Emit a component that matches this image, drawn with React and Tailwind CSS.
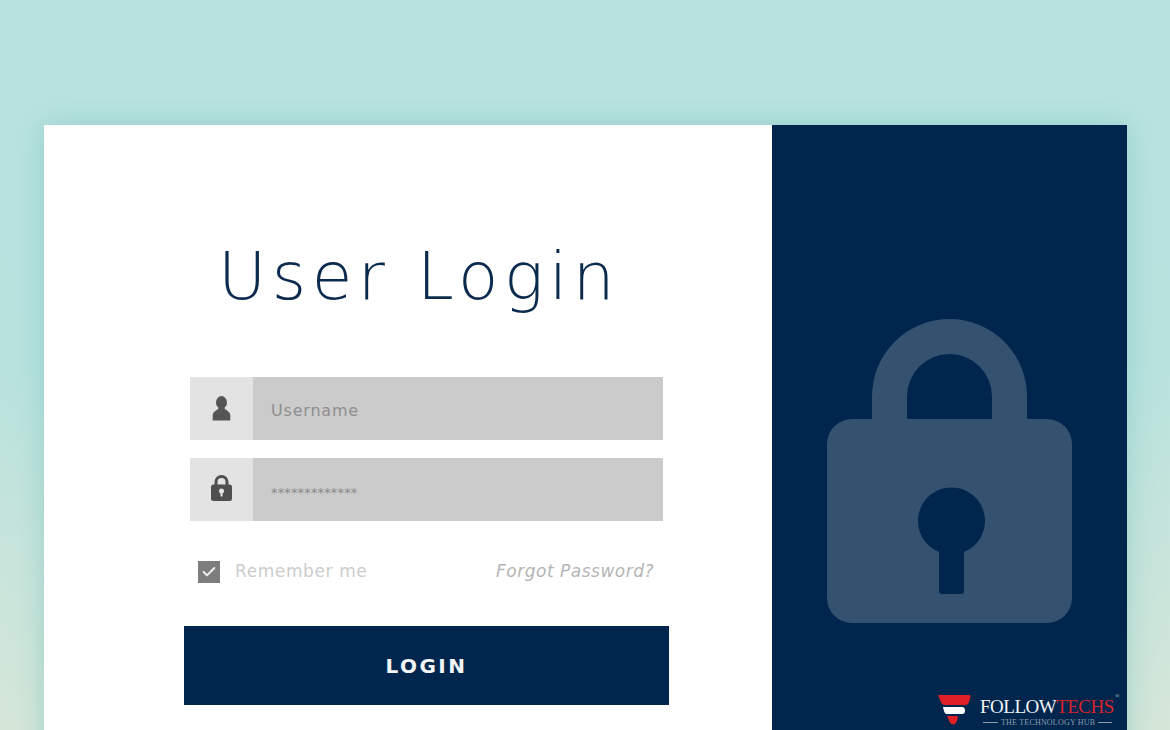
import { Check } from 'lucide-react';

const LoginField = ({ icon, children }) => {
    return (
        <div className="flex h-[63px] w-[473px]">
            <div className="flex w-[63px] items-center justify-center bg-[#e3e3e3]">{icon}</div>
            <div className="flex flex-1 items-center bg-[#cbcbcb] pl-[18px]">{children}</div>
        </div>
    );
};

const UserIcon = () => (
    <svg width="19" height="25" viewBox="0 0 19 25" fill="#555555">
        <ellipse cx="9.500" cy="6.500" rx="5.500" ry="6.500" />
        <path d="M6.500 12h6c.3 2 5.500 3.200 5.800 7v5.500H.7V19c.3-3.800 5.500-5 5.800-7z" />
    </svg>
);

const SmallLockIcon = () => (
    <svg width="21" height="26" viewBox="0 0 21 26" className="mb-[3px]">
        <path d="M5 11V7a5.500 5.500 0 0 1 11 0v4" fill="none" stroke="#4f4f4f" strokeWidth="3" />
        <rect x="0" y="9.500" width="21" height="16.500" rx="2.500" fill="#4f4f4f" />
        <circle cx="10.500" cy="16" r="2.500" fill="#e3e3e3" />
        <rect x="9.500" y="16.500" width="2" height="5" fill="#e3e3e3" />
    </svg>
);

const BigLock = () => (
    <svg width="245" height="304" viewBox="0 0 245 304" className="ml-[55px] mt-[194px]">
        <path
            fillRule="evenodd"
            fill="#345270"
            d="M45 100V77.500a77.500 77.500 0 0 1 155 0V100h20a25 25 0 0 1 25 25v154a25 25 0 0 1-25 25H25a25 25 0 0 1-25-25V125a25 25 0 0 1 25-25zM80 100h85V77.500a42.500 42.500 0 0 0-85 0zM112 233v39a3 3 0 0 0 3 3h19a3 3 0 0 0 3-3v-39a33.500 33.500 0 1 0-25 0z"
        />
    </svg>
);

const Logo = () => (
    <div className="absolute right-[7px] bottom-0 flex h-[36px] w-[182px] items-start">
        <svg width="33" height="30" viewBox="0 0 33 30" className="mt-[1px] shrink-0">
            <path d="M0 0h31q2 0 1.500 2l-1.500 5q-1 3-4 3H6q-2 0-3-3z" fill="#e11f26" />
            <path d="M5 12h19q3 0 3 3.500t-3 3.500H8q-1 0-2-3z" fill="#ffffff" />
            <path d="M9 21h10q1.500 0 1 1.500l-1.500 4.500q-1 2.500-3.500 2.500-2 0-3-2z" fill="#e11f26" />
        </svg>
        <div className="relative ml-[9px] flex-1 font-['Liberation_Serif',serif]">
            <div className="mt-[3px] text-[19px] leading-[20px] tracking-[-0.500px] whitespace-nowrap">
                <span className="text-[#f1f3f5]">FOLLOW</span>
                <span className="text-[#d9222a]">TECHS</span>
            </div>
            <span className="absolute top-[-1px] left-[135px] text-[6px] leading-[7px] text-[#b9c2cc]">®</span>
            <div className="mt-[1px] flex items-center gap-[3px] pr-[8px] pl-[3px] text-[8px] leading-[9px] text-[#8f9cab]">
                <span className="h-px w-[15px] bg-[#8f9cab]" />
                <span className="tracking-[0.200px] whitespace-nowrap">THE TECHNOLOGY HUB</span>
                <span className="h-px w-[14px] bg-[#8f9cab]" />
            </div>
        </div>
    </div>
);

const App = () => {
    return (
        <div className="h-[730px] w-[1170px] overflow-hidden bg-gradient-to-b from-[#b9e3e0] via-[#b9e3df] to-[#d6e7d9] pt-[125px] pl-[44px] font-['DejaVu_Sans',sans-serif]">
            <div className="flex h-[640px] w-[1083px] shadow-[0_0_28px_rgba(110,190,185,0.5)]">
                <div className="w-[728px] bg-white pl-[140px]">
                    <h1 className="mt-[112px] ml-[34px] w-[440px] text-[66px] leading-[80px] font-extralight tracking-[5.500px] whitespace-nowrap text-[#0b2a4d]">
                        User Login
                    </h1>
                    <div className="mt-[60px] ml-[6px] flex flex-col gap-[18px]">
                        <LoginField icon={<UserIcon />}>
                            <span className="mt-[4px] text-[16px] tracking-[0.800px] text-[#8e8e8e]">Username</span>
                        </LoginField>
                        <LoginField icon={<SmallLockIcon />}>
                            <span className="mt-[6px] text-[13px] leading-none tracking-[0.150px] text-[#8a8a8a]">*************</span>
                        </LoginField>
                    </div>
                    <div className="mt-[40px] ml-[14px] flex h-[22px] w-[456px] items-center">
                        <div className="flex h-[22px] w-[22px] items-center justify-center bg-[#7d7d7d]">
                            <Check size={16} strokeWidth={3} color="#f0f0f0" />
                        </div>
                        <span className="ml-[15px] text-[17px] tracking-[0.600px] text-[#cccccc]">Remember me</span>
                        <span className="ml-auto text-[17px] tracking-[0.500px] text-[#b4b4b4] italic">Forgot Password?</span>
                    </div>
                    <button className="mt-[43px] h-[79px] w-[485px] bg-[#00264d] pt-[1px] text-[20px] font-bold tracking-[2.500px] text-[#f2f4f6]">
                        LOGIN
                    </button>
                </div>
                <div className="relative h-full w-[355px] bg-[#00264d]">
                    <div className="flex">
                        <BigLock />
                    </div>
                    <div className="absolute top-[570px] left-0 h-[35px] w-full">
                        <Logo />
                    </div>
                </div>
            </div>
        </div>
    );
};

export default App;
